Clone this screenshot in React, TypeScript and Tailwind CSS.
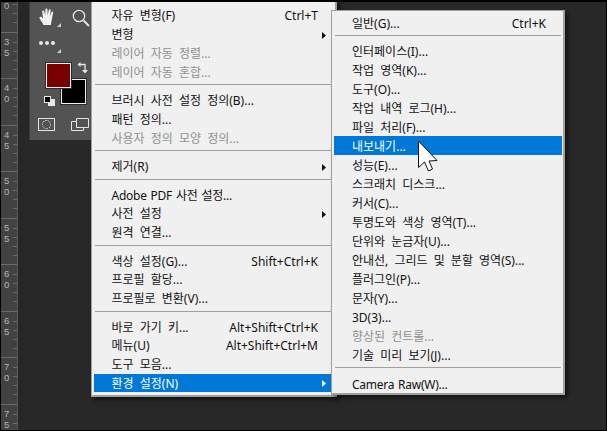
type Item = { label?: string; shortcut?: string; disabled?: boolean; arrow?: boolean; active?: boolean; sep?: boolean; tight?: boolean; sepClass?: string };

const leftMenu: Item[] = [
  { label: "자유 변형(F)", shortcut: "Ctrl+T" },
  { label: "변형", arrow: true },
  { label: "레이어 자동 정렬...", disabled: true },
  { label: "레이어 자동 혼합...", disabled: true },
  { sep: true },
  { label: "브러시 사전 설정 정의(B)..." },
  { label: "패턴 정의..." },
  { label: "사용자 정의 모양 정의...", disabled: true },
  { sep: true },
  { label: "제거(R)", arrow: true },
  { sep: true },
  { label: "Adobe PDF 사전 설정...", tight: true },
  { label: "사전 설정", arrow: true },
  { label: "원격 연결..." },
  { sep: true },
  { label: "색상 설정(G)...", shortcut: "Shift+Ctrl+K" },
  { label: "프로필 할당..." },
  { label: "프로필로 변환(V)..." },
  { sep: true },
  { label: "바로 가기 키...", shortcut: "Alt+Shift+Ctrl+K" },
  { label: "메뉴(U)", shortcut: "Alt+Shift+Ctrl+M" },
  { label: "도구 모음..." },
  { label: "환경 설정(N)", arrow: true, active: true },
];

const rightMenu: Item[] = [
  { label: "일반(G)...", shortcut: "Ctrl+K" },
  { sep: true, sepClass: "h-[9px]" },
  { label: "인터페이스(I)..." },
  { label: "작업 영역(K)..." },
  { label: "도구(O)..." },
  { label: "작업 내역 로그(H)..." },
  { label: "파일 처리(F)..." },
  { label: "내보내기...", active: true },
  { label: "성능(E)..." },
  { label: "스크래치 디스크..." },
  { label: "커서(C)..." },
  { label: "투명도와 색상 영역(T)..." },
  { label: "단위와 눈금자(U)..." },
  { label: "안내선, 그리드 및 분할 영역(S)..." },
  { label: "플러그인(P)..." },
  { label: "문자(Y)..." },
  { label: "3D(3)..." },
  { label: "향상된 컨트롤...", disabled: true },
  { label: "기술 미리 보기(J)..." },
  { sep: true, sepClass: "h-[10px]" },
  { label: "Camera Raw(W)...", tight: true },
];

const rulerMarks = ["30", "35", "40", "45", "50", "55", "60", "65", "70", "75"];

function MenuList({ items, rowClass, sepClass }: { items: Item[]; rowClass: string; sepClass: string }) {
  return (
    <>
      {items.map((item, i) =>
        item.sep ? (
          <div key={i} className={`mx-px shrink-0 pt-[3px] ${item.sepClass ?? sepClass}`}>
            <div className="h-px w-full bg-[#a0a0a0]" />
          </div>
        ) : (
          <div
            key={i}
            className={`flex shrink-0 items-center pt-[2px] whitespace-nowrap ${rowClass} ${
              item.active ? "bg-[#0078d7] text-white" : item.disabled ? "text-[#8f8f8f]" : "text-[#111111]"
            }`}
          >
            <span className={`flex-1 ${item.tight ? "tracking-[-0.25px] [word-spacing:1px]" : "[word-spacing:3px]"}`}>{item.label}</span>
            {item.shortcut && <span className="pr-[16px]">{item.shortcut}</span>}
            {item.arrow && (
              <svg width="4" height="7" viewBox="0 0 4 7" className="mr-[8px]">
                <path d="M0 0 L4 3.5 L0 7 Z" fill={item.active ? "#ffffff" : "#111111"} />
              </svg>
            )}
          </div>
        )
      )}
    </>
  );
}

function Ruler() {
  return (
    <div className="flex h-full w-[17px] shrink-0 flex-col overflow-hidden border-r border-[#5a5a5a] bg-[#424242]">
      <div className="-mt-[17px] flex flex-col">
        {rulerMarks.map((m) => (
          <div key={m} className="flex h-[46.5px] shrink-0 border-t border-[#6a6a6a]">
            <div className="flex w-[12px] flex-col pl-[3px] pt-[3px] font-['Liberation_Sans',sans-serif] text-[9.5px] leading-[11px] text-[#b4b4b4]">
              <span>{m[0]}</span>
              <span>{m[1]}</span>
            </div>
            <div className="flex flex-1 flex-col items-end">
              <div className="h-[9.3px] w-full" />
              <div className="h-[9.3px] w-full border-t border-[#6a6a6a]" />
              <div className="h-[9.3px] w-full border-t border-[#6a6a6a]" />
              <div className="h-[9.3px] w-full border-t border-[#6a6a6a]" />
              <div className="h-[9.3px] w-full border-t border-[#6a6a6a]" />
            </div>
          </div>
        ))}
      </div>
    </div>
  );
}

function Toolbar() {
  return (
    <div className="relative ml-[11px] h-[138px] w-[62px] border-l border-[#3a3a3a] bg-[#535353]">
      {/* hand */}
      <svg width="18" height="18" viewBox="0 0 18 18" className="absolute left-[9px] top-[6px]">
        <path
          d="M4.5 17 C3.5 14.5 1 11.5 0.5 10 C0.2 8.8 1.5 8.2 2.5 9 L4 10.5 L3.2 3.5 C3.1 2 5 2 5.3 3.5 L6.2 7.5 L6.4 1.5 C6.5 0 8.4 0 8.5 1.5 L8.7 7.5 L9.8 2 C10.1 0.7 11.8 1 11.7 2.4 L11 8 L12.6 4 C13.1 2.9 14.5 3.4 14.2 4.6 C13.6 7.5 13 11 12.5 13 C12.2 14.5 12 16 12 17 Z"
          fill="#f0f0f0"
        />
      </svg>
      {/* zoom */}
      <svg width="18" height="18" viewBox="0 0 18 18" className="absolute left-[42px] top-[7px]">
        <circle cx="7" cy="7" r="5.7" fill="none" stroke="#e4e4e4" strokeWidth="1.3" />
        <path d="M11.5 11.5 L17 17" stroke="#e4e4e4" strokeWidth="2" />
      </svg>
      {/* more tools */}
      <div className="absolute left-[9px] top-[39px] flex gap-[2px]">
        <div className="size-[4px] rounded-full bg-[#e8e8e8]" />
        <div className="size-[4px] rounded-full bg-[#e8e8e8]" />
        <div className="size-[4px] rounded-full bg-[#e8e8e8]" />
      </div>
      <svg width="4" height="4" viewBox="0 0 4 4" className="absolute left-[27px] top-[21px]">
        <path d="M4 0 V4 H0 Z" fill="#d0d0d0" />
      </svg>
      <svg width="4" height="4" viewBox="0 0 4 4" className="absolute left-[27px] top-[47px]">
        <path d="M4 0 V4 H0 Z" fill="#d0d0d0" />
      </svg>
      {/* colours */}
      <div className="absolute left-[31px] top-[77px] h-[25px] w-[25px] border border-[#f0f0f0] bg-black outline outline-[#2a2a2a]" />
      <div className="absolute left-[16px] top-[61px] h-[25px] w-[25px] border border-[#f0f0f0] bg-[#780000] outline outline-[#2a2a2a]" />
      <svg width="11" height="12" viewBox="0 0 11 12" className="absolute left-[47px] top-[60px]">
        <path d="M1.5 2.5 H8 V9" fill="none" stroke="#e6e6e6" strokeWidth="1.3" />
        <path d="M5 8 H11 L8 11.5 Z M3.5 0 L0.5 2.5 L3.5 5 Z" fill="#e6e6e6" />
      </svg>
      <div className="absolute left-[18px] top-[97px] size-[7px] bg-[#e8e8e8]" />
      <div className="absolute left-[14px] top-[94px] size-[7px] border border-[#e8e8e8] bg-black" />
      {/* quick mask */}
      <div className="absolute left-[8px] top-[116px] flex h-[13px] w-[17px] items-center justify-center border border-[#e4e4e4]">
        <div className="size-[9px] rounded-full border border-dotted border-[#e4e4e4]" />
      </div>
      {/* screen mode */}
      <svg width="18" height="14" viewBox="0 0 18 14" className="absolute left-[41px] top-[116px]">
        <path d="M5.5 0.5 H17.5 V9.5 H5.5 Z M5.5 3.5 H0.5 V12.5 H12.5 V9.5" fill="none" stroke="#e4e4e4" strokeWidth="1" />
      </svg>
    </div>
  );
}

export default function App() {
  return (
    <div className="relative flex h-[431px] w-[607px] overflow-hidden border border-t-2 border-black bg-[#282828] font-['Noto_Sans','Noto_Sans_CJK_KR',sans-serif] text-[12px]">
      <Ruler />
      <Toolbar />

      {/* edit menu */}
      <div className="absolute left-[90px] top-[-2px] flex h-[397px] w-[246px] flex-col border-r-2 border-b-2 border-l border-[#a0a0a0] bg-[#f0f0f0] pr-[1px] pl-[2px] pt-[6px] shadow-[3px_3px_4px_rgba(0,0,0,0.5)]">
        <MenuList items={leftMenu} rowClass="h-[18.8px] pl-[17.5px]" sepClass="h-[9.6px]" />
      </div>

      {/* preferences submenu */}
      <div className="absolute left-[330px] top-[8px] flex h-[385px] w-[234px] flex-col border-t border-r-2 border-b-2 border-l border-[#a0a0a0] bg-[#f0f0f0] pr-[1px] pl-[2px] pt-[2px] shadow-[3px_3px_4px_rgba(0,0,0,0.5)]">
        <MenuList items={rightMenu} rowClass="h-[19px] pl-[18px]" sepClass="h-[10px]" />
      </div>

      {/* cursor */}
      <svg width="24" height="33" viewBox="0 0 24 33" className="absolute left-[416px] top-[138px]">
        <path d="M1.5 1 V27.5 L7.5 22 L11.5 31 L15.5 29 L12 21 L20 20.5 Z" fill="#ffffff" stroke="#111111" strokeWidth="1" />
      </svg>
    </div>
  );
}
